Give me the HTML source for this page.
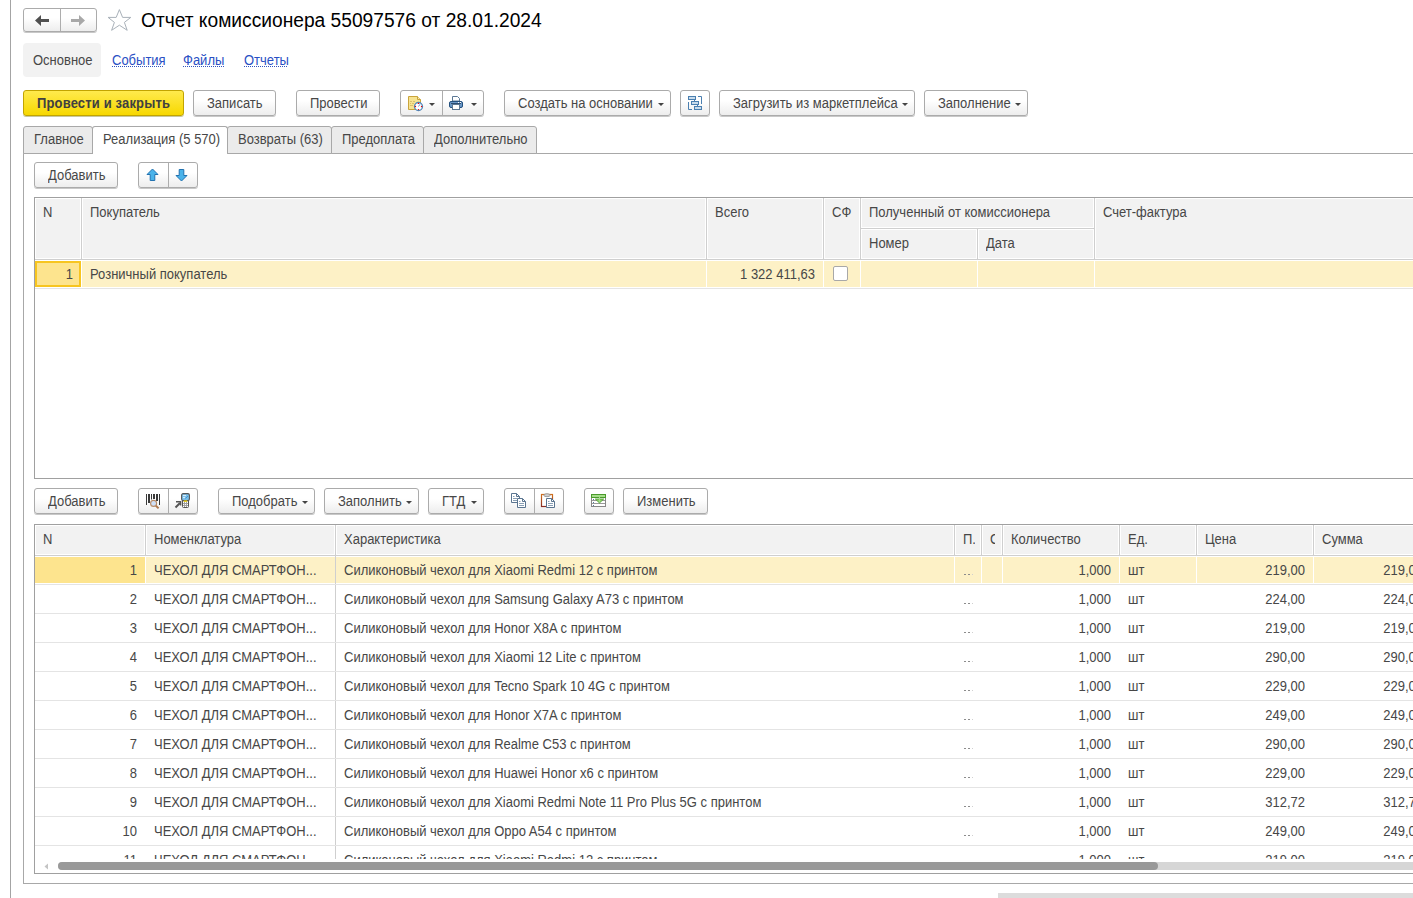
<!DOCTYPE html>
<html><head><meta charset="utf-8">
<style>
*{box-sizing:border-box;margin:0;padding:0}
html,body{width:1413px;height:898px;overflow:hidden;background:#fff}
body{position:relative;font-family:"Liberation Sans",sans-serif;font-size:13px;color:#474747;line-height:15px;white-space:nowrap}
.a{position:absolute}
.t{position:absolute;line-height:15px;transform:scaleY(1.1);transform-origin:0 12px}
.btn{position:absolute;height:26px;border:1px solid #ababab;border-radius:3px;background:linear-gradient(#fff 0%,#fff 40%,#ededed 100%);box-shadow:0 1px 0 #c8c8c8}
.grp{position:absolute;border:1px solid #ababab;border-radius:3px;background:linear-gradient(#fff 0%,#fff 40%,#ededed 100%);box-shadow:0 1px 0 #c8c8c8}
.dd{position:absolute;width:0;height:0;border-left:3px solid transparent;border-right:3px solid transparent;border-top:3px solid #444}
.tab{position:absolute;top:126px;height:28px;border:1px solid #a8a8a8;border-radius:3px 3px 0 0;background:#ebebeb}
.hl{position:absolute;background:#d4d4d4}
</style></head><body>
<!-- left frame line -->
<div class="a" style="left:10px;top:0;width:1px;height:898px;background:#a4a4a4"></div>

<!-- nav buttons -->
<div class="grp" style="left:23px;top:8px;width:74px;height:24px"></div>
<div class="a" style="left:60px;top:9px;width:1px;height:22px;background:#adadad"></div>
<svg class="a" style="left:30px;top:12px" width="24" height="16" viewBox="0 0 24 16"><path d="M5 8.5 L11 3 L11 7 L19 7 L19 10 L11 10 L11 14 Z" fill="#505050"/></svg>
<svg class="a" style="left:67px;top:12px" width="24" height="16" viewBox="0 0 24 16"><path d="M18 8.5 L12 3 L12 7 L4 7 L4 10 L12 10 L12 14 Z" fill="#a8a8a8"/></svg>
<!-- star -->
<svg class="a" style="left:104px;top:4px" width="32" height="32" viewBox="104 4 32 32"><path d="M119.4 9.6 L122.6 17.4 L130.8 17.4 L124.4 22.4 L127.2 30.3 L119.4 25.2 L111.6 30.3 L114.4 22.4 L108.1 17.4 L116.2 17.4 Z" fill="none" stroke="#a9b1b9" stroke-width="1"/></svg>
<div class="t" style="left:141px;top:10px;font-size:19.2px;transform:scaleY(1.06);transform-origin:0 17px;line-height:21px;color:#000">Отчет комиссионера 55097576 от 28.01.2024</div>

<!-- section links -->
<div class="a" style="left:23px;top:43px;width:78px;height:34px;background:#f2f2f2;border-radius:4px"></div>
<div class="t" style="left:33px;top:53px">Основное</div>
<div class="t" style="left:112px;top:53px;color:#2a50c4">События</div>
<div class="t" style="left:183px;top:53px;color:#2a50c4">Файлы</div>
<div class="t" style="left:244px;top:53px;color:#2a50c4">Отчеты</div>

<div class="a" style="left:112px;top:66px;width:51px;height:1px;background:repeating-linear-gradient(90deg,#3355c0 0 1px,transparent 1px 2px)"></div>
<div class="a" style="left:183px;top:66px;width:41px;height:1px;background:repeating-linear-gradient(90deg,#3355c0 0 1px,transparent 1px 2px)"></div>
<div class="a" style="left:244px;top:66px;width:44px;height:1px;background:repeating-linear-gradient(90deg,#3355c0 0 1px,transparent 1px 2px)"></div>
<!-- main toolbar -->
<div class="a" style="left:23px;top:90px;width:161px;height:26px;border:1px solid #c2a400;border-radius:3px;background:linear-gradient(#ffea4d,#f7d800);box-shadow:0 1px 0 #c8c8a0"></div>
<div class="t" style="left:37px;top:96px;font-weight:bold;color:#404040;letter-spacing:0.15px">Провести и закрыть</div>
<div class="btn" style="left:193px;top:90px;width:83px"></div>
<div class="t" style="left:207px;top:96px">Записать</div>
<div class="btn" style="left:296px;top:90px;width:84px"></div>
<div class="t" style="left:310px;top:96px">Провести</div>
<div class="grp" style="left:400px;top:90px;width:84px;height:26px"></div>
<div class="a" style="left:442px;top:91px;width:1px;height:24px;background:#adadad"></div>
<div class="dd" style="left:429px;top:103px"></div>
<div class="dd" style="left:471px;top:103px"></div>
<div class="btn" style="left:504px;top:90px;width:167px"></div>
<div class="t" style="left:518px;top:96px">Создать на основании</div>
<div class="dd" style="left:658px;top:103px"></div>
<div class="btn" style="left:680px;top:90px;width:30px"></div>
<div class="btn" style="left:719px;top:90px;width:196px"></div>
<div class="t" style="left:733px;top:96px">Загрузить из маркетплейса</div>
<div class="dd" style="left:902px;top:103px"></div>
<div class="btn" style="left:924px;top:90px;width:104px"></div>
<div class="t" style="left:938px;top:96px">Заполнение</div>
<div class="dd" style="left:1015px;top:103px"></div>

<!-- tabs -->
<div class="a" style="left:23px;top:153px;width:1390px;height:731px;border:1px solid #a8a8a8;border-right:none"></div>
<div class="tab" style="left:23px;width:70px"></div>
<div class="t" style="left:34px;top:132px">Главное</div>
<div class="tab" style="left:92px;width:136px;background:#fff;border-bottom:none;height:28px"></div>
<div class="t" style="left:103px;top:132px">Реализация (5 570)</div>
<div class="tab" style="left:227px;width:105px"></div>
<div class="t" style="left:238px;top:132px">Возвраты (63)</div>
<div class="tab" style="left:331px;width:93px"></div>
<div class="t" style="left:342px;top:132px">Предоплата</div>
<div class="tab" style="left:423px;width:114px"></div>
<div class="t" style="left:434px;top:132px">Дополнительно</div>

<svg class="a" style="left:400px;top:90px" width="28" height="26" viewBox="0 0 28 26">
<path d="M8.5 6.5 H17.5 L20.5 9.5 V19.5 H8.5 Z" fill="#f6e391" stroke="#c9a43c" stroke-width="1" stroke-linejoin="round"/>
<path d="M17.5 6.5 V9.5 H20.5" fill="#f8eab0" stroke="#c9a43c" stroke-width="1"/>
<path d="M10 11.5 H12 M13 11.5 H15 M10 13.5 H11 M12 13.5 H14 M10 15.5 H13" stroke="#d8bf6c" stroke-width="1"/>
<circle cx="18.5" cy="16.5" r="4" fill="#fff" stroke="#5088ba" stroke-width="1.3"/>
<path d="M18.5 16.5 L20 14.3" stroke="#6c94d4" stroke-width="1"/>
<circle cx="18.5" cy="13.4" r="0.7" fill="#e00"/><circle cx="21.6" cy="16.5" r="0.7" fill="#e00"/>
<circle cx="18.5" cy="19.6" r="0.7" fill="#e00"/><circle cx="15.4" cy="16.5" r="0.7" fill="#e00"/>
</svg>
<svg class="a" style="left:444px;top:90px" width="26" height="26" viewBox="0 0 26 26">
<path d="M8.5 6.5 H13.5 L15.5 8.5 V11 H8.5 Z" fill="#fff" stroke="#5c7894" stroke-width="1"/>
<rect x="5.5" y="11.5" width="13" height="6" rx="1.5" fill="#6a98c8" stroke="#24507e" stroke-width="1"/>
<path d="M7 13.5 H17" stroke="#2c4c70" stroke-width="1"/>
<rect x="14" y="12" width="1" height="1" fill="#fff"/><rect x="16" y="12" width="1" height="1" fill="#fff"/>
<rect x="8.5" y="14.5" width="7" height="5" fill="#fff" stroke="#5c7894" stroke-width="1"/>
</svg>
<svg class="a" style="left:680px;top:90px" width="30" height="26" viewBox="0 0 30 26">
<g fill="#c9dcec" stroke="#4a7fb0" stroke-width="1">
<rect x="8.5" y="6.5" width="7" height="3"/><rect x="11.5" y="11.5" width="7" height="3"/><rect x="14.5" y="16.5" width="7" height="3"/>
</g>
<path d="M14.5 10 V11 M17.5 15 V16 M18 6.5 H21.5 V14 M8.5 12 V19.5 H12" fill="none" stroke="#4a7fb0" stroke-width="1"/>
</svg>
<div class="btn" style="left:34px;top:162px;width:84px"></div>
<div class="t" style="left:48px;top:168px;">Добавить</div>
<div class="grp" style="left:138px;top:162px;width:60px;height:26px"></div>
<div class="a" style="left:168px;top:163px;width:1px;height:24px;background:#adadad"></div>
<svg class="a" style="left:146px;top:168px" width="13" height="14" viewBox="0 0 13 14"><path d="M6.5 1 L12 6.5 L8.8 6.5 L8.8 12.5 L4.2 12.5 L4.2 6.5 L1 6.5 Z" fill="#4ab3ea" stroke="#2272b0" stroke-width="1" stroke-linejoin="miter"/></svg>
<svg class="a" style="left:175px;top:168px" width="13" height="14" viewBox="0 0 13 14"><path d="M6.5 13 L12 7.5 L8.8 7.5 L8.8 1.5 L4.2 1.5 L4.2 7.5 L1 7.5 Z" fill="#4ab3ea" stroke="#2272b0" stroke-width="1" stroke-linejoin="miter"/></svg>
<div class="a" style="left:34px;top:197px;width:1379px;height:282px;border:1px solid #a0a0a0;border-right:none;background:#fff"></div>
<div class="a" style="left:35px;top:198px;width:1378px;height:61px;background:#cfcfcf"></div>
<div class="a" style="left:35px;top:259px;width:1378px;height:1px;background:#cfcfcf"></div>
<div class="a" style="left:35px;top:198px;width:46px;height:61px;border:1px solid #fff;background:#f2f2f2"></div>
<div class="a" style="left:82px;top:198px;width:624px;height:61px;border:1px solid #fff;background:#f2f2f2"></div>
<div class="a" style="left:707px;top:198px;width:116px;height:61px;border:1px solid #fff;background:#f2f2f2"></div>
<div class="a" style="left:824px;top:198px;width:36px;height:61px;border:1px solid #fff;background:#f2f2f2"></div>
<div class="a" style="left:861px;top:198px;width:233px;height:30px;border:1px solid #fff;background:#f2f2f2"></div>
<div class="a" style="left:861px;top:229px;width:116px;height:30px;border:1px solid #fff;background:#f2f2f2"></div>
<div class="a" style="left:978px;top:229px;width:116px;height:30px;border:1px solid #fff;background:#f2f2f2"></div>
<div class="a" style="left:1095px;top:198px;width:405px;height:61px;border:1px solid #fff;background:#f2f2f2"></div>
<div class="t" style="left:43px;top:205px;">N</div>
<div class="t" style="left:90px;top:205px;">Покупатель</div>
<div class="t" style="left:715px;top:205px;">Всего</div>
<div class="t" style="left:832px;top:205px;">СФ</div>
<div class="t" style="left:869px;top:205px;">Полученный от комиссионера</div>
<div class="t" style="left:869px;top:236px;">Номер</div>
<div class="t" style="left:986px;top:236px;">Дата</div>
<div class="t" style="left:1103px;top:205px;">Счет-фактура</div>
<div class="a" style="left:35px;top:260px;width:1378px;height:28px;background:#fff"></div>
<div class="a" style="left:35px;top:288px;width:1378px;height:1px;background:#e4e4e4"></div>
<div class="a" style="left:35px;top:261px;width:46px;height:26px;background:#fde48e;border:2px solid #f7c520"></div>
<div class="a" style="left:82px;top:261px;width:624px;height:26px;background:#fdf1c6"></div>
<div class="a" style="left:707px;top:261px;width:116px;height:26px;background:#fdf1c6"></div>
<div class="a" style="left:824px;top:261px;width:36px;height:26px;background:#fdf1c6"></div>
<div class="a" style="left:861px;top:261px;width:116px;height:26px;background:#fdf1c6"></div>
<div class="a" style="left:978px;top:261px;width:116px;height:26px;background:#fdf1c6"></div>
<div class="a" style="left:1095px;top:261px;width:405px;height:26px;background:#fdf1c6"></div>
<div class="t" style="left:-227px;top:267px;width:300px;text-align:right;">1</div>
<div class="t" style="left:90px;top:267px;">Розничный покупатель</div>
<div class="t" style="left:515px;top:267px;width:300px;text-align:right;">1 322 411,63</div>
<div class="a" style="left:833px;top:266px;width:15px;height:15px;border:1px solid #a8a8a8;border-radius:2px;background:#fff"></div>

<div class="btn" style="left:34px;top:488px;width:84px"></div>
<div class="t" style="left:48px;top:494px;">Добавить</div>
<div class="grp" style="left:138px;top:488px;width:60px;height:26px"></div>
<div class="a" style="left:168px;top:489px;width:1px;height:24px;background:#adadad"></div>
<svg class="a" style="left:138px;top:488px" width="30" height="26" viewBox="0 0 30 26">
<g fill="#3a3a3a">
<rect x="8" y="6" width="1" height="11"/><rect x="10" y="6" width="2" height="9"/><rect x="13" y="6" width="1" height="5.5"/>
<rect x="15" y="6" width="2" height="5"/><rect x="18" y="6" width="2" height="7"/><rect x="21" y="6" width="1" height="11"/>
</g>
<circle cx="15.6" cy="15.4" r="3" fill="#cfe0f8" stroke="#b88c68" stroke-width="1.1"/>
<path d="M17.9 17.7 L20.6 20.4" stroke="#b07a50" stroke-width="2"/>
</svg>
<svg class="a" style="left:168px;top:488px" width="30" height="26" viewBox="0 0 30 26">
<rect x="14.5" y="12" width="6" height="7.5" rx="1" fill="#fff" stroke="#555" stroke-width="1"/>
<path d="M16.5 13.5 V19 M18.5 13.5 V19 M15 15.5 H20 M15 17.5 H20" stroke="#9a9a9a" stroke-width="0.9"/>
<rect x="13.6" y="5.6" width="7.8" height="7" rx="1.5" fill="#78bfea" stroke="#555" stroke-width="1.1"/>
<path d="M15 7.6 H18 M15 9.6 H17" stroke="#eaf6ff" stroke-width="0.9"/>
<path d="M17.5 10.5 L20 8" stroke="#3d8fd0" stroke-width="0.9"/>
<rect x="15.8" y="12.4" width="3.4" height="1.4" fill="#f0d000"/>
<path d="M7.5 19.5 L12 15" stroke="#555" stroke-width="2"/>
<path d="M8 13.7 H12.6 V17.5" fill="none" stroke="#555" stroke-width="1.5"/>
</svg>
<div class="btn" style="left:218px;top:488px;width:97px"></div>
<div class="t" style="left:232px;top:494px;">Подобрать</div>
<div class="dd" style="left:302px;top:501px"></div>
<div class="btn" style="left:324px;top:488px;width:95px"></div>
<div class="t" style="left:338px;top:494px;">Заполнить</div>
<div class="dd" style="left:406px;top:501px"></div>
<div class="btn" style="left:428px;top:488px;width:56px"></div>
<div class="t" style="left:442px;top:494px;">ГТД</div>
<div class="dd" style="left:471px;top:501px"></div>
<div class="grp" style="left:504px;top:488px;width:60px;height:26px"></div>
<div class="a" style="left:534px;top:489px;width:1px;height:24px;background:#adadad"></div>
<div class="btn" style="left:584px;top:488px;width:30px"></div>
<svg class="a" style="left:504px;top:488px" width="60" height="26" viewBox="0 0 60 26">
<defs><linearGradient id="clipg" x1="0" y1="0" x2="0" y2="1"><stop offset="0" stop-color="#d0701e"/><stop offset="1" stop-color="#8a2c22"/></linearGradient></defs>
<path d="M7.5 5.5 H12.5 L15.5 8.5 V14.5 H7.5 Z" fill="#fff" stroke="#5a7590" stroke-width="1"/>
<path d="M12.5 5.5 V8.5 H15.5" fill="none" stroke="#5a7590" stroke-width="1"/>
<path d="M9 8.5 H10.5 M9 10.5 H13 M9 12.5 H13" stroke="#8aa0b5" stroke-width="1"/>
<path d="M13.5 10.5 H18.5 L21.5 13.5 V19.5 H13.5 Z" fill="#fff" stroke="#5a7590" stroke-width="1"/>
<path d="M18.5 10.5 V13.5 H21.5" fill="none" stroke="#5a7590" stroke-width="1"/>
<path d="M15 13.5 H16.5 M15 15.5 H20 M15 17.5 H20" stroke="#8aa0b5" stroke-width="1"/>
<rect x="37.5" y="6.5" width="11" height="12" fill="#fff" stroke="url(#clipg)" stroke-width="1.2"/>
<ellipse cx="43" cy="7.2" rx="3.2" ry="1.5" fill="#cfcfcf" stroke="#8f8f8f" stroke-width="0.8"/>
<path d="M42.5 10.5 H47.5 L50.5 13.5 V19.5 H42.5 Z" fill="#fff" stroke="#5a7590" stroke-width="1"/>
<path d="M47.5 10.5 V13.5 H50.5" fill="none" stroke="#5a7590" stroke-width="1"/>
<path d="M44 13.5 H45.5 M44 15.5 H49 M44 17.5 H49" stroke="#8aa0b5" stroke-width="1"/>
</svg>
<svg class="a" style="left:584px;top:488px" width="30" height="26" viewBox="0 0 30 26">
<rect x="7.5" y="9.5" width="14" height="9" fill="#fff" stroke="#888" stroke-width="1"/>
<path d="M8 12.5 H21 M8 15.5 H21" stroke="#999" stroke-width="1"/>
<rect x="9" y="11" width="1" height="1" fill="#5a7a9a"/><rect x="9" y="14" width="1" height="1" fill="#5a7a9a"/><rect x="9" y="17" width="1" height="1" fill="#5a7a9a"/>
<rect x="7.5" y="6.5" width="14" height="3" fill="#a5de8a" stroke="#4a9a2c" stroke-width="1"/>
<path d="M11.3 11 H19.7 L15.5 15 Z" fill="#8ed46c" stroke="#4a9a2c" stroke-width="0.8" stroke-linejoin="round"/>
<path d="M15.5 8.5 V14" stroke="#a5de8a" stroke-width="1.1"/>
</svg>
<div class="btn" style="left:623px;top:488px;width:85px"></div>
<div class="t" style="left:637px;top:494px;">Изменить</div>
<div class="a" style="left:34px;top:524px;width:1379px;height:350px;border:1px solid #a0a0a0;border-right:none;background:#fff"></div>
<div class="a" style="left:35px;top:525px;width:1378px;height:31px;background:#cfcfcf"></div>
<div class="a" style="left:35px;top:525px;width:110px;height:30px;border:1px solid #fff;background:#f2f2f2"></div>
<div class="a" style="left:146px;top:525px;width:189px;height:30px;border:1px solid #fff;background:#f2f2f2"></div>
<div class="a" style="left:336px;top:525px;width:618px;height:30px;border:1px solid #fff;background:#f2f2f2"></div>
<div class="a" style="left:955px;top:525px;width:26px;height:30px;border:1px solid #fff;background:#f2f2f2"></div>
<div class="a" style="left:982px;top:525px;width:20px;height:30px;border:1px solid #fff;background:#f2f2f2"></div>
<div class="a" style="left:1003px;top:525px;width:116px;height:30px;border:1px solid #fff;background:#f2f2f2"></div>
<div class="a" style="left:1120px;top:525px;width:76px;height:30px;border:1px solid #fff;background:#f2f2f2"></div>
<div class="a" style="left:1197px;top:525px;width:116px;height:30px;border:1px solid #fff;background:#f2f2f2"></div>
<div class="a" style="left:1314px;top:525px;width:116px;height:30px;border:1px solid #fff;background:#f2f2f2"></div>
<div class="a" style="left:1431px;top:525px;width:100px;height:30px;border:1px solid #fff;background:#f2f2f2"></div>
<div class="t" style="left:43px;top:532px;">N</div>
<div class="t" style="left:154px;top:532px;">Номенклатура</div>
<div class="t" style="left:344px;top:532px;">Характеристика</div>
<div class="t" style="left:963px;top:532px;width:12px;overflow:hidden">П.</div>
<div class="t" style="left:990px;top:532px;width:5px;overflow:hidden">С</div>
<div class="t" style="left:1011px;top:532px;">Количество</div>
<div class="t" style="left:1128px;top:532px;">Ед.</div>
<div class="t" style="left:1205px;top:532px;">Цена</div>
<div class="t" style="left:1322px;top:532px;">Сумма</div>
<div class="a" style="left:35px;top:556px;width:1378px;height:303px;overflow:hidden">
<div class="a" style="left:0px;top:0px;width:1378px;height:28px;background:#fff"></div>
<div class="a" style="left:0px;top:1px;width:110px;height:26px;background:#fde48e"></div>
<div class="a" style="left:111px;top:1px;width:189px;height:26px;background:#fdf1c6"></div>
<div class="a" style="left:301px;top:1px;width:618px;height:26px;background:#fdf1c6"></div>
<div class="a" style="left:920px;top:1px;width:26px;height:26px;background:#fdf1c6"></div>
<div class="a" style="left:947px;top:1px;width:20px;height:26px;background:#fdf1c6"></div>
<div class="a" style="left:968px;top:1px;width:116px;height:26px;background:#fdf1c6"></div>
<div class="a" style="left:1085px;top:1px;width:76px;height:26px;background:#fdf1c6"></div>
<div class="a" style="left:1162px;top:1px;width:116px;height:26px;background:#fdf1c6"></div>
<div class="a" style="left:1279px;top:1px;width:116px;height:26px;background:#fdf1c6"></div>
<div class="a" style="left:1396px;top:1px;width:100px;height:26px;background:#fdf1c6"></div>
<div class="a" style="left:0px;top:28px;width:1378px;height:1px;background:#e4e4e4"></div>
<div class="a" style="left:300px;top:0px;width:1px;height:28px;background:#cfcfcf"></div>
<div class="t" style="left:-198px;top:7px;width:300px;text-align:right;">1</div>
<div class="t" style="left:119px;top:7px;">ЧЕХОЛ ДЛЯ СМАРТФОН...</div>
<div class="t" style="left:309px;top:7px;">Силиконовый чехол для Xiaomi Redmi 12 с принтом</div>
<div class="a" style="left:929px;top:18px;width:10px;height:1px;background:linear-gradient(90deg,#8c8c8c 0 2px,transparent 2px 4px,#8c8c8c 4px 6px,transparent 6px 8px,#d0d0d0 8px 9px,transparent 9px)"></div>
<div class="t" style="left:776px;top:7px;width:300px;text-align:right;">1,000</div>
<div class="t" style="left:1093px;top:7px;">шт</div>
<div class="t" style="left:970px;top:7px;width:300px;text-align:right;">219,00</div>
<div class="t" style="left:1088px;top:7px;width:300px;text-align:right;">219,00</div>
<div class="a" style="left:0px;top:57px;width:1378px;height:1px;background:#e4e4e4"></div>
<div class="a" style="left:300px;top:29px;width:1px;height:28px;background:#cfcfcf"></div>
<div class="t" style="left:-198px;top:36px;width:300px;text-align:right;">2</div>
<div class="t" style="left:119px;top:36px;">ЧЕХОЛ ДЛЯ СМАРТФОН...</div>
<div class="t" style="left:309px;top:36px;">Силиконовый чехол для Samsung Galaxy A73 с принтом</div>
<div class="a" style="left:929px;top:47px;width:10px;height:1px;background:linear-gradient(90deg,#8c8c8c 0 2px,transparent 2px 4px,#8c8c8c 4px 6px,transparent 6px 8px,#d0d0d0 8px 9px,transparent 9px)"></div>
<div class="t" style="left:776px;top:36px;width:300px;text-align:right;">1,000</div>
<div class="t" style="left:1093px;top:36px;">шт</div>
<div class="t" style="left:970px;top:36px;width:300px;text-align:right;">224,00</div>
<div class="t" style="left:1088px;top:36px;width:300px;text-align:right;">224,00</div>
<div class="a" style="left:0px;top:86px;width:1378px;height:1px;background:#e4e4e4"></div>
<div class="a" style="left:300px;top:58px;width:1px;height:28px;background:#cfcfcf"></div>
<div class="t" style="left:-198px;top:65px;width:300px;text-align:right;">3</div>
<div class="t" style="left:119px;top:65px;">ЧЕХОЛ ДЛЯ СМАРТФОН...</div>
<div class="t" style="left:309px;top:65px;">Силиконовый чехол для Honor X8A с принтом</div>
<div class="a" style="left:929px;top:76px;width:10px;height:1px;background:linear-gradient(90deg,#8c8c8c 0 2px,transparent 2px 4px,#8c8c8c 4px 6px,transparent 6px 8px,#d0d0d0 8px 9px,transparent 9px)"></div>
<div class="t" style="left:776px;top:65px;width:300px;text-align:right;">1,000</div>
<div class="t" style="left:1093px;top:65px;">шт</div>
<div class="t" style="left:970px;top:65px;width:300px;text-align:right;">219,00</div>
<div class="t" style="left:1088px;top:65px;width:300px;text-align:right;">219,00</div>
<div class="a" style="left:0px;top:115px;width:1378px;height:1px;background:#e4e4e4"></div>
<div class="a" style="left:300px;top:87px;width:1px;height:28px;background:#cfcfcf"></div>
<div class="t" style="left:-198px;top:94px;width:300px;text-align:right;">4</div>
<div class="t" style="left:119px;top:94px;">ЧЕХОЛ ДЛЯ СМАРТФОН...</div>
<div class="t" style="left:309px;top:94px;">Силиконовый чехол для Xiaomi 12 Lite с принтом</div>
<div class="a" style="left:929px;top:105px;width:10px;height:1px;background:linear-gradient(90deg,#8c8c8c 0 2px,transparent 2px 4px,#8c8c8c 4px 6px,transparent 6px 8px,#d0d0d0 8px 9px,transparent 9px)"></div>
<div class="t" style="left:776px;top:94px;width:300px;text-align:right;">1,000</div>
<div class="t" style="left:1093px;top:94px;">шт</div>
<div class="t" style="left:970px;top:94px;width:300px;text-align:right;">290,00</div>
<div class="t" style="left:1088px;top:94px;width:300px;text-align:right;">290,00</div>
<div class="a" style="left:0px;top:144px;width:1378px;height:1px;background:#e4e4e4"></div>
<div class="a" style="left:300px;top:116px;width:1px;height:28px;background:#cfcfcf"></div>
<div class="t" style="left:-198px;top:123px;width:300px;text-align:right;">5</div>
<div class="t" style="left:119px;top:123px;">ЧЕХОЛ ДЛЯ СМАРТФОН...</div>
<div class="t" style="left:309px;top:123px;">Силиконовый чехол для Tecno Spark 10 4G с принтом</div>
<div class="a" style="left:929px;top:134px;width:10px;height:1px;background:linear-gradient(90deg,#8c8c8c 0 2px,transparent 2px 4px,#8c8c8c 4px 6px,transparent 6px 8px,#d0d0d0 8px 9px,transparent 9px)"></div>
<div class="t" style="left:776px;top:123px;width:300px;text-align:right;">1,000</div>
<div class="t" style="left:1093px;top:123px;">шт</div>
<div class="t" style="left:970px;top:123px;width:300px;text-align:right;">229,00</div>
<div class="t" style="left:1088px;top:123px;width:300px;text-align:right;">229,00</div>
<div class="a" style="left:0px;top:173px;width:1378px;height:1px;background:#e4e4e4"></div>
<div class="a" style="left:300px;top:145px;width:1px;height:28px;background:#cfcfcf"></div>
<div class="t" style="left:-198px;top:152px;width:300px;text-align:right;">6</div>
<div class="t" style="left:119px;top:152px;">ЧЕХОЛ ДЛЯ СМАРТФОН...</div>
<div class="t" style="left:309px;top:152px;">Силиконовый чехол для Honor X7A с принтом</div>
<div class="a" style="left:929px;top:163px;width:10px;height:1px;background:linear-gradient(90deg,#8c8c8c 0 2px,transparent 2px 4px,#8c8c8c 4px 6px,transparent 6px 8px,#d0d0d0 8px 9px,transparent 9px)"></div>
<div class="t" style="left:776px;top:152px;width:300px;text-align:right;">1,000</div>
<div class="t" style="left:1093px;top:152px;">шт</div>
<div class="t" style="left:970px;top:152px;width:300px;text-align:right;">249,00</div>
<div class="t" style="left:1088px;top:152px;width:300px;text-align:right;">249,00</div>
<div class="a" style="left:0px;top:202px;width:1378px;height:1px;background:#e4e4e4"></div>
<div class="a" style="left:300px;top:174px;width:1px;height:28px;background:#cfcfcf"></div>
<div class="t" style="left:-198px;top:181px;width:300px;text-align:right;">7</div>
<div class="t" style="left:119px;top:181px;">ЧЕХОЛ ДЛЯ СМАРТФОН...</div>
<div class="t" style="left:309px;top:181px;">Силиконовый чехол для Realme C53 с принтом</div>
<div class="a" style="left:929px;top:192px;width:10px;height:1px;background:linear-gradient(90deg,#8c8c8c 0 2px,transparent 2px 4px,#8c8c8c 4px 6px,transparent 6px 8px,#d0d0d0 8px 9px,transparent 9px)"></div>
<div class="t" style="left:776px;top:181px;width:300px;text-align:right;">1,000</div>
<div class="t" style="left:1093px;top:181px;">шт</div>
<div class="t" style="left:970px;top:181px;width:300px;text-align:right;">290,00</div>
<div class="t" style="left:1088px;top:181px;width:300px;text-align:right;">290,00</div>
<div class="a" style="left:0px;top:231px;width:1378px;height:1px;background:#e4e4e4"></div>
<div class="a" style="left:300px;top:203px;width:1px;height:28px;background:#cfcfcf"></div>
<div class="t" style="left:-198px;top:210px;width:300px;text-align:right;">8</div>
<div class="t" style="left:119px;top:210px;">ЧЕХОЛ ДЛЯ СМАРТФОН...</div>
<div class="t" style="left:309px;top:210px;">Силиконовый чехол для Huawei Honor x6 с принтом</div>
<div class="a" style="left:929px;top:221px;width:10px;height:1px;background:linear-gradient(90deg,#8c8c8c 0 2px,transparent 2px 4px,#8c8c8c 4px 6px,transparent 6px 8px,#d0d0d0 8px 9px,transparent 9px)"></div>
<div class="t" style="left:776px;top:210px;width:300px;text-align:right;">1,000</div>
<div class="t" style="left:1093px;top:210px;">шт</div>
<div class="t" style="left:970px;top:210px;width:300px;text-align:right;">229,00</div>
<div class="t" style="left:1088px;top:210px;width:300px;text-align:right;">229,00</div>
<div class="a" style="left:0px;top:260px;width:1378px;height:1px;background:#e4e4e4"></div>
<div class="a" style="left:300px;top:232px;width:1px;height:28px;background:#cfcfcf"></div>
<div class="t" style="left:-198px;top:239px;width:300px;text-align:right;">9</div>
<div class="t" style="left:119px;top:239px;">ЧЕХОЛ ДЛЯ СМАРТФОН...</div>
<div class="t" style="left:309px;top:239px;">Силиконовый чехол для Xiaomi Redmi Note 11 Pro Plus 5G с принтом</div>
<div class="a" style="left:929px;top:250px;width:10px;height:1px;background:linear-gradient(90deg,#8c8c8c 0 2px,transparent 2px 4px,#8c8c8c 4px 6px,transparent 6px 8px,#d0d0d0 8px 9px,transparent 9px)"></div>
<div class="t" style="left:776px;top:239px;width:300px;text-align:right;">1,000</div>
<div class="t" style="left:1093px;top:239px;">шт</div>
<div class="t" style="left:970px;top:239px;width:300px;text-align:right;">312,72</div>
<div class="t" style="left:1088px;top:239px;width:300px;text-align:right;">312,72</div>
<div class="a" style="left:0px;top:289px;width:1378px;height:1px;background:#e4e4e4"></div>
<div class="a" style="left:300px;top:261px;width:1px;height:28px;background:#cfcfcf"></div>
<div class="t" style="left:-198px;top:268px;width:300px;text-align:right;">10</div>
<div class="t" style="left:119px;top:268px;">ЧЕХОЛ ДЛЯ СМАРТФОН...</div>
<div class="t" style="left:309px;top:268px;">Силиконовый чехол для Oppo A54 с принтом</div>
<div class="a" style="left:929px;top:279px;width:10px;height:1px;background:linear-gradient(90deg,#8c8c8c 0 2px,transparent 2px 4px,#8c8c8c 4px 6px,transparent 6px 8px,#d0d0d0 8px 9px,transparent 9px)"></div>
<div class="t" style="left:776px;top:268px;width:300px;text-align:right;">1,000</div>
<div class="t" style="left:1093px;top:268px;">шт</div>
<div class="t" style="left:970px;top:268px;width:300px;text-align:right;">249,00</div>
<div class="t" style="left:1088px;top:268px;width:300px;text-align:right;">249,00</div>
<div class="a" style="left:0px;top:318px;width:1378px;height:1px;background:#e4e4e4"></div>
<div class="a" style="left:300px;top:290px;width:1px;height:28px;background:#cfcfcf"></div>
<div class="t" style="left:-198px;top:297px;width:300px;text-align:right;">11</div>
<div class="t" style="left:119px;top:297px;">ЧЕХОЛ ДЛЯ СМАРТФОН...</div>
<div class="t" style="left:309px;top:297px;">Силиконовый чехол для Xiaomi Redmi 12 с принтом</div>
<div class="a" style="left:929px;top:308px;width:10px;height:1px;background:linear-gradient(90deg,#8c8c8c 0 2px,transparent 2px 4px,#8c8c8c 4px 6px,transparent 6px 8px,#d0d0d0 8px 9px,transparent 9px)"></div>
<div class="t" style="left:776px;top:297px;width:300px;text-align:right;">1,000</div>
<div class="t" style="left:1093px;top:297px;">шт</div>
<div class="t" style="left:970px;top:297px;width:300px;text-align:right;">219,00</div>
<div class="t" style="left:1088px;top:297px;width:300px;text-align:right;">219,00</div>
</div>
<svg class="a" style="left:44px;top:863px" width="5" height="7" viewBox="0 0 5 7"><path d="M4 0.5 L4 6.5 L0.5 3.5 Z" fill="#c4c4c4"/></svg>
<div class="a" style="left:58px;top:862px;width:1355px;height:8px;background:#d6d6d6;border-radius:4px 0 0 4px"></div>
<div class="a" style="left:58px;top:862px;width:1100px;height:8px;background:#999;border-radius:4px"></div>


<!-- bottom page scrollbar -->
<div class="a" style="left:998px;top:893px;width:415px;height:5px;background:#dcdcdc"></div>
</body></html>
